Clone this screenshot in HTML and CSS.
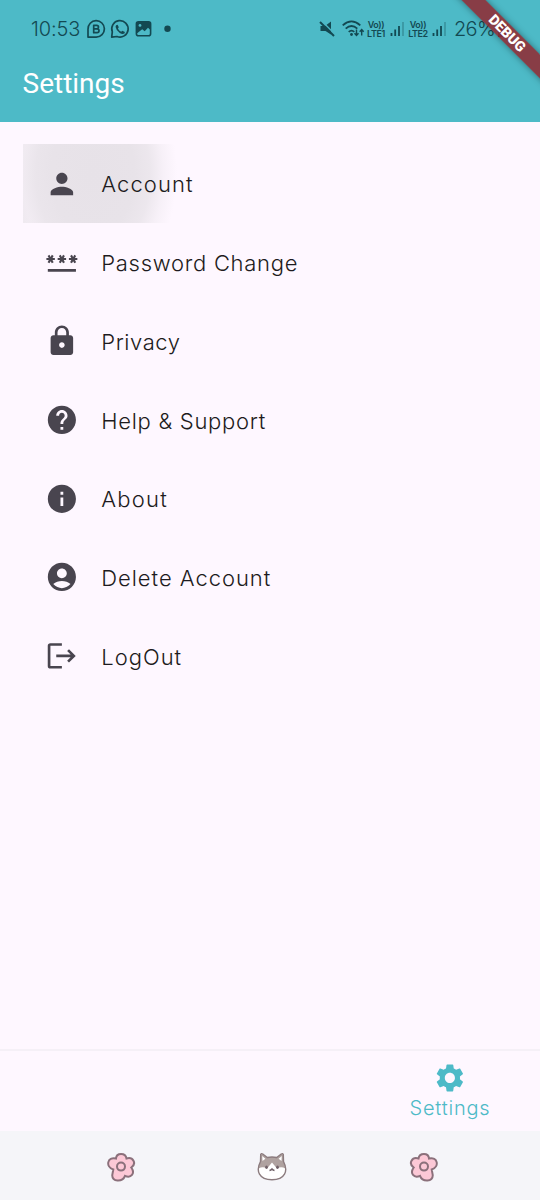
FILE: index.html
```html
<!DOCTYPE html>
<html lang="en">
<head>
<meta charset="utf-8">
<title>Settings</title>
<link rel="stylesheet" href="styles.css">
</head>
<body>
<div class="screen">
  <header class="header">
    <div class="status">
      <span class="clock">10:53</span>
      <svg class="notifications" width="90" height="22" viewBox="0 0 90 22">
        <g fill="none" stroke="currentColor" stroke-width="1.7" stroke-linejoin="round">
          <path d="M2 19.1V11.2A8.2 8.2 0 1 1 10.2 19.1Z"/>
          <path d="M7.7 7.3h3a1.8 1.8 0 0 1 0 3.6h-3zm0 3.6h3.4a1.9 1.9 0 0 1 0 3.8H7.7z"/>
          <path d="M25.7 19.1l.6-5.300a8.200 8.200 0 1 1 4.700 4.700z"/>
        </g>
        <path d="M30.100 7.200l1.500-.5 1.200 2.600-.9 1.100q1 2.200 3.300 3.300l1.100-1 2.600 1.200-.5 1.500q-1.800 1.200-4.600-.5-3.800-2.800-4.200-6 0-1 .5-1.700z" fill="currentColor"/>
        <rect x="50.400" y="3.800" width="14.200" height="14" rx="2" fill="none" stroke="currentColor" stroke-width="1.600"/>
        <path d="M50 4h15v8.500l-3-2.800-3.300 3.500-2.500-2-5.700 4.500z" fill="currentColor"/>
        <circle cx="54" cy="7.400" r="1.400" fill="#4dbac7"/>
        <circle cx="81.500" cy="10.800" r="3.200" fill="currentColor"/>
      </svg>
      <div class="connectivity">
        <svg class="mute" width="18" height="18" viewBox="0 0 18 18">
          <path d="M1.500 6h4.500l6-4.500v13L6.500 11h-5z" fill="currentColor"/>
          <path d="M2.500 .800l13 13" stroke="#4dbac7" stroke-width="1.400"/>
          <path d="M1 2l14 14" stroke="currentColor" stroke-width="1.900"/>
        </svg>
        <svg class="wifi" width="24" height="20" viewBox="0 0 24 20">
          <g fill="none" stroke="currentColor" stroke-width="1.800">
            <path d="M.700 6.300q8.800-7.800 17.600 0M3.700 9.700q5.800-5.300 11.600 0M6.700 12.900q2.800-2.500 5.600 0"/>
            <path d="M14.500 10.500v6M12.500 14.300l2 2.200 2-2.200M19.700 16.500v-6M17.700 12.700l2-2.200 2 2.200" stroke-width="1.400"/>
          </g>
          <circle cx="9.500" cy="15.500" r="1.400" fill="currentColor"/>
        </svg>
        <div class="lte"><span>Vo))</span><span>LTE1</span></div>
        <svg class="signal" width="15" height="16" viewBox="0 0 15 16"><path d="M1.500 12v3M5.200 8.500V15M9 5v10" stroke="currentColor" stroke-width="1.800"/><path d="M13 1v14" stroke="currentColor" stroke-width="1.600" opacity=".35"/></svg>
        <div class="lte second"><span>Vo))</span><span>LTE2</span></div>
        <svg class="signal" width="15" height="16" viewBox="0 0 15 16"><path d="M1.500 12v3M5.200 8.500V15M9 5v10" stroke="currentColor" stroke-width="1.800"/><path d="M13 1v14" stroke="currentColor" stroke-width="1.600" opacity=".35"/></svg>
        <span class="battery">26%</span>
        <svg class="cell" width="12" height="18" viewBox="0 0 12 18"><path d="M4 2h4v2h3v13H1V4h3z" fill="currentColor"/></svg>
      </div>
    </div>
    <h1 class="title">Settings</h1>
    <div class="debug"><span>DEBUG</span></div>
  </header>

  <main class="list">
    <div class="item pressed">
      <svg class="icon" viewBox="0 0 24 24"><path d="M12 12c2.210 0 4-1.790 4-4s-1.790-4-4-4-4 1.790-4 4 1.790 4 4 4zm0 2c-2.670 0-8 1.340-8 4v2h16v-2c0-2.660-5.330-4-8-4z"/></svg>
      <span class="label account">Account</span>
    </div>
    <div class="item">
      <svg class="icon" viewBox="0 0 24 24"><path d="M2 17h20v2H2v-2zm1.150-4.050L4 11.470l.850 1.480 1.300-.750-.850-1.480H7v-1.500H5.300l.850-1.470L4.850 7 4 8.470 3.150 7l-1.300.750.850 1.470H1v1.500h1.700l-.850 1.480 1.300.750zm6.700-.750l1.300.750.850-1.480.850 1.480 1.300-.750-.850-1.480H15v-1.500h-1.700l.850-1.470-1.300-.750L12 8.470 11.150 7l-1.300.750.850 1.470H9v1.500h1.700l-.850 1.480zM23 9.220h-1.700l.850-1.470-1.300-.750L20 8.470 19.150 7l-1.300.750.850 1.470H17v1.500h1.700l-.850 1.480 1.300.750.850-1.480.850 1.480 1.300-.750-.850-1.480H23v-1.500z"/></svg>
      <span class="label password">Password Change</span>
    </div>
    <div class="item">
      <svg class="icon" viewBox="0 0 24 24"><path d="M18 8h-1V6c0-2.760-2.240-5-5-5S7 3.240 7 6v2H6c-1.100 0-2 .900-2 2v10c0 1.100.900 2 2 2h12c1.100 0 2-.900 2-2V10c0-1.100-.900-2-2-2zm-6 9c-1.100 0-2-.900-2-2s.900-2 2-2 2 .900 2 2-.900 2-2 2zm3.100-9H8.900V6c0-1.710 1.390-3.100 3.100-3.100 1.710 0 3.100 1.390 3.100 3.100v2z"/></svg>
      <span class="label privacy">Privacy</span>
    </div>
    <div class="item">
      <svg class="icon" viewBox="0 0 24 24"><path d="M12 2C6.480 2 2 6.480 2 12s4.480 10 10 10 10-4.480 10-10S17.520 2 12 2zm1 17h-2v-2h2v2zm2.070-7.750l-.900.920C13.450 12.900 13 13.500 13 15h-2v-.500c0-1.100.450-2.100 1.170-2.830l1.240-1.260c.370-.360.590-.860.590-1.410 0-1.100-.900-2-2-2s-2 .900-2 2H8c0-2.210 1.790-4 4-4s4 1.790 4 4c0 .880-.360 1.680-.930 2.250z"/></svg>
      <span class="label help">Help &amp; Support</span>
    </div>
    <div class="item">
      <svg class="icon" viewBox="0 0 24 24"><path d="M12 2C6.480 2 2 6.480 2 12s4.480 10 10 10 10-4.480 10-10S17.520 2 12 2zm1 15h-2v-6h2v6zm0-8h-2V7h2v2z"/></svg>
      <span class="label about">About</span>
    </div>
    <div class="item">
      <svg class="icon" viewBox="0 0 24 24"><path d="M12 2C6.480 2 2 6.480 2 12s4.480 10 10 10 10-4.480 10-10S17.520 2 12 2zm0 4c1.930 0 3.500 1.570 3.500 3.500S13.930 13 12 13s-3.500-1.570-3.500-3.500S10.070 6 12 6zm0 14c-2.030 0-4.430-.820-6.140-2.880C7.550 15.800 9.680 15 12 15s4.450.800 6.140 2.120C16.430 19.180 14.030 20 12 20z"/></svg>
      <span class="label delete">Delete Account</span>
    </div>
    <div class="item">
      <svg class="icon" viewBox="0 0 24 24"><path d="M12 3.900H3.900q-1 0-1 .900v14.400q0 .900 1 .900H12M8 12h12.500M16.400 7.900l4.100 4.100-4.100 4.100" fill="none" stroke="#49454f" stroke-width="1.900"/></svg>
      <span class="label logout">LogOut</span>
    </div>
  </main>

  <nav class="tabs">
    <div class="tab">
      <svg class="gear" viewBox="0 0 24 24"><path d="M19.140 12.940c.040-.300.060-.610.060-.940 0-.320-.020-.640-.070-.940l2.030-1.580c.180-.140.230-.410.120-.610l-1.920-3.320c-.120-.220-.370-.290-.590-.220l-2.390.960c-.500-.380-1.030-.700-1.620-.940L14.400 2.810c-.040-.240-.240-.410-.480-.410h-3.840c-.240 0-.430.170-.470.410L9.250 5.350c-.590.240-1.130.570-1.620.940L5.240 5.330c-.220-.080-.470 0-.590.220L2.740 8.870c-.120.210-.080.470.120.610l2.030 1.580c-.050.300-.090.630-.090.940s.020.640.070.940l-2.030 1.580c-.180.140-.230.410-.120.610l1.920 3.320c.120.220.370.290.590.220l2.390-.960c.500.380 1.030.700 1.620.940l.360 2.540c.050.240.240.410.480.410h3.840c.240 0 .440-.170.470-.410l.360-2.540c.590-.240 1.130-.560 1.620-.940l2.390.960c.220.080.470 0 .590-.220l1.920-3.320c.120-.220.070-.470-.120-.610l-2.010-1.580zM12 15.600c-1.980 0-3.600-1.620-3.600-3.600s1.620-3.600 3.600-3.600 3.600 1.620 3.600 3.600-1.620 3.600-3.600 3.600z"/></svg>
      <span class="tab-label">Settings</span>
    </div>
  </nav>

  <footer class="system">
    <svg class="flower" viewBox="0 0 30 30"><path d="M10 6.500C10.500 .500 19.500 .500 20.500 6.500 27 4.500 31 11.500 25.300 15.500 29.500 21.500 25 26.500 19 23.800 16.500 30.500 5.500 30 6.300 22.800L7.300 17.500C-1 14.500 1.500 4.500 10 6.500Z"/><circle cx="15" cy="14.600" r="4"/></svg>
    <svg class="cat" viewBox="0 0 32 32"><path d="M4.500 10.500L4.700 3.500Q5.200 2 6.800 3L11.300 6.500Q16 5.500 20.700 6.500L25.200 3Q26.800 2 27.300 3.500L27.500 10.500C32.500 20 29 28.800 16 28.800 3 28.800 -.500 20 4.500 10.500Z" fill="#fff"/><path d="M4.500 10.500L4.700 3.500 6.800 3 11.300 6.500Q16 5.500 20.700 6.500L25.200 3 27.300 3.500 27.500 10.500Q29.800 14 29.500 17.500 25 15 21 17.500L16 11.500 11 17.500Q7 15 2.500 17.500 2.200 14 4.500 10.500Z" fill="#afa2a0"/><path d="M6.200 5l3.200 2.800-2.900 2.200zM25.800 5L22.600 7.800l2.900 2.200z" fill="#fff"/><path d="M4.500 10.500L4.700 3.500Q5.200 2 6.800 3L11.300 6.500Q16 5.500 20.700 6.500L25.200 3Q26.800 2 27.300 3.500L27.500 10.500C32.500 20 29 28.800 16 28.800 3 28.800 -.500 20 4.500 10.500Z" fill="none" stroke="#8b7b7e" stroke-width="1.400"/><path d="M13.500 19.500q1.500-.2 2.500-1.500 1 1.300 2.500 1.500" fill="none" stroke="#6f6067" stroke-width="1.400"/><g fill="#6f6067"><ellipse cx="10.500" cy="16.200" rx="1.300" ry="1.800"/><ellipse cx="21.500" cy="16.200" rx="1.300" ry="1.800"/></g></svg>
    <svg class="flower mirrored" viewBox="0 0 30 30"><path d="M10 6.500C10.500 .500 19.500 .500 20.500 6.500 27 4.500 31 11.500 25.300 15.500 29.500 21.500 25 26.500 19 23.800 16.500 30.500 5.500 30 6.300 22.800L7.300 17.500C-1 14.500 1.500 4.500 10 6.500Z"/><circle cx="15" cy="14.600" r="4"/></svg>
  </footer>
</div>
</body>
</html>
```

FILE: styles.css
```css
* { box-sizing: border-box; }
body { margin: 0; font-family: Inter, sans-serif; }
svg { display: block; flex: none; }
.screen { width: 540px; height: 1200px; display: flex; flex-direction: column; background: #fef7ff; overflow: hidden; }

.header { position: relative; height: 122px; background: #4dbac7; overflow: hidden; flex: none; }
.status { display: flex; align-items: center; height: 58px; padding-left: 31px; color: #134952; }
.clock { width: 55px; font: 300 20px/24px Inter, sans-serif; letter-spacing: -.1px; white-space: nowrap; }
.connectivity { display: flex; align-items: center; margin-left: 143px; }
.mute { margin-right: 5px; }
.lte { display: flex; flex-direction: column; align-items: center; width: 20px; font: 600 9px/9px Inter, sans-serif; letter-spacing: -.4px; white-space: nowrap; }
.signal { margin-left: 4px; }
.lte.second { margin-left: 3px; }
.battery { margin-left: 7px; width: 41px; font: 300 20px/24px Inter, sans-serif; letter-spacing: -.7px; white-space: nowrap; }
.cell { margin-left: 2px; }
.title { margin: 10px 0 0 22.5px; color: #fff; font: 400 28px/32px Roboto, sans-serif; letter-spacing: 0; }
.debug { position: absolute; left: 426.5px; top: 24.5px; width: 160px; height: 17px; transform: rotate(45deg); display: flex; justify-content: center; align-items: center; background: rgba(145, 43, 51, .87); box-shadow: 0 0 7px rgba(0, 0, 0, .4); color: #fff; font: 900 14.3px/17px Roboto, sans-serif; }

.list { flex: 1; display: flex; flex-direction: column; padding: 22px 22.5px 0; }
.item { display: flex; align-items: center; gap: 22.5px; height: 78.75px; padding-left: 22.5px; }
.pressed { background: radial-gradient(ellipse 84px 120px at 70px 30px, #e7e2e8 0%, #e8e3e9 50%, rgba(233, 228, 234, .85) 68%, rgba(242, 236, 243, .6) 84%, rgba(254, 247, 255, 0) 100%) no-repeat, linear-gradient(90deg, #eee9ef, rgba(254, 247, 255, 0) 90px); }
.icon { width: 33.75px; height: 33.75px; fill: #49454f; }
.label { color: #1d1b20; font-size: 22px; line-height: 32px; font-weight: 300; white-space: nowrap; padding-top: 2px; }
.account { letter-spacing: 1.1px; }
.password { letter-spacing: .72px; }
.privacy { letter-spacing: .58px; }
.help { letter-spacing: .72px; }
.about { letter-spacing: 1.25px; }
.delete { letter-spacing: .96px; }
.logout { letter-spacing: 1px; }

.tabs { height: 82px; display: flex; justify-content: flex-end; border-top: 2px solid #f5f0f7; flex: none; }
.tab { width: 180px; display: flex; flex-direction: column; align-items: center; padding-top: 9.5px; color: #4dbac7; }
.gear { width: 33.75px; height: 33.75px; fill: currentColor; }
.tab-label { font-size: 20px; line-height: 28px; font-weight: 300; letter-spacing: .8px; }

.system { height: 69px; display: flex; align-items: center; justify-content: space-between; padding: 2px 101px 0 106px; background: #f5f5f9; flex: none; }
.flower { width: 30px; height: 30px; fill: #fcc8d6; stroke: #8b707b; stroke-width: 2; }
.mirrored { transform: scaleX(-1); }
.cat { width: 32px; height: 32px; margin-right: 2px; }
```
